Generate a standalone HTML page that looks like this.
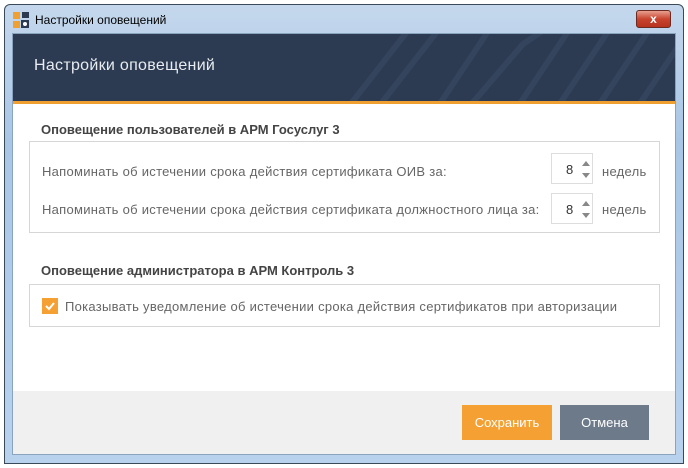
<!DOCTYPE html>
<html><head><meta charset="utf-8"><style>
*{margin:0;padding:0;box-sizing:border-box}
body{width:688px;height:468px;background:#fff;font-family:"Liberation Sans",sans-serif;position:relative;overflow:hidden}
.frame{position:absolute;left:4px;top:4px;width:680px;height:460px;border:1px solid #3a4a5a;border-radius:6px 6px 0 0;background:linear-gradient(#c4d7ec,#a9c6e6 30%,#b8d2ee)}
.title{position:absolute;left:35px;top:13px;font-size:12px;color:#000}
.icon{position:absolute;left:13px;top:12px;width:16px;height:16px}
.close{position:absolute;left:636px;top:10px;width:35px;height:18px;border:1px solid #6b2a22;border-radius:3px;background:linear-gradient(#e8a090,#c8442e 50%,#b8321e);color:#fff;font-weight:bold;font-size:12px;text-align:center;line-height:16px}
.content{position:absolute;left:12px;top:33px;width:664px;height:422px;background:#fff;border:1px solid #8aa4c0}
.hdr{position:absolute;left:0;top:0;width:662px;height:67px;background:#2c3b52;overflow:hidden}
.hdr span{position:absolute;left:21px;top:23px;color:#e8ecf0;font-size:16px;letter-spacing:0.3px}
.orange{position:absolute;left:0;top:67px;width:662px;height:3px;background:#f0a030}
.gt{position:absolute;font-size:13px;font-weight:bold;color:#444}
.box{position:absolute;border:1px solid #d6d6d6;background:#fff}
.lbl{position:absolute;font-size:13px;color:#666;white-space:nowrap;letter-spacing:0.28px}
.spin{position:absolute;width:42px;height:31px;border:1px solid #ddd;font-size:13px;color:#333}
.spin b{position:absolute;left:14px;top:8px;font-weight:normal}
.up,.dn{position:absolute;left:30px;width:0;height:0;border-left:4px solid transparent;border-right:4px solid transparent}
.up{top:7px;border-bottom:5px solid #888}.dn{top:19px;border-top:5px solid #888}
.foot{position:absolute;left:0;top:357px;width:662px;height:63px;background:#f0f0f0}
.btn{position:absolute;top:14px;height:35px;color:#fff;font-size:13px;text-align:center;line-height:35px}
</style></head><body>
<div class="frame"></div>
<svg class="icon" viewBox="0 0 16 16"><rect x="0" y="0" width="7" height="7" fill="#f0a030"/><rect x="0" y="9" width="7" height="7" fill="#f0a030"/><rect x="8" y="8" width="8" height="8" fill="#2c3b52"/><circle cx="12" cy="12" r="2" fill="#fff"/><rect x="9" y="0" width="7" height="6" fill="#2c3b52"/></svg>
<div class="title">Настройки оповещений</div>
<div class="close">x</div>
<div class="content">
<div class="hdr">
<svg width="662" height="67" style="position:absolute;left:0;top:0" fill="none" stroke="#34445c" stroke-width="6"><path d="M330 80 L400 -10 M360 80 L430 -10 M420 80 L480 -10 M450 80 L510 10 L540 -10 M500 80 L560 -10 M540 80 L600 -10 M580 80 L640 -10 M620 80 L680 -10"/></svg>
<span>Настройки оповещений</span></div>
<div class="orange"></div>
<div class="gt" style="left:28px;top:88px">Оповещение пользователей в АРМ Госуслуг 3</div>
<div class="box" style="left:16px;top:107px;width:631px;height:92px"></div>
<div class="lbl" style="left:29px;top:130px">Напоминать об истечении срока действия сертификата ОИВ за:</div>
<div class="spin" style="left:538px;top:119px"><b>8</b><i class="up"></i><i class="dn"></i></div>
<div class="lbl" style="left:589px;top:130px">недель</div>
<div class="lbl" style="left:29px;top:168px">Напоминать об истечении срока действия сертификата должностного лица за:</div>
<div class="spin" style="left:538px;top:159px"><b>8</b><i class="up"></i><i class="dn"></i></div>
<div class="lbl" style="left:589px;top:168px">недель</div>
<div class="gt" style="left:28px;top:229px">Оповещение администратора в АРМ Контроль 3</div>
<div class="box" style="left:16px;top:250px;width:631px;height:43px"></div>
<div style="position:absolute;left:29px;top:264px;width:16px;height:16px;background:#f5a033"><svg width="16" height="16"><path d="M4 8 L7 11 L12 5" stroke="#fff" stroke-width="2" fill="none"/></svg></div>
<div class="lbl" style="left:52px;top:265px">Показывать уведомление об истечении срока действия сертификатов при авторизации</div>
<div class="foot">
<div class="btn" style="left:449px;width:90px;background:#f5a033">Сохранить</div>
<div class="btn" style="left:547px;width:89px;background:#6c7a89">Отмена</div>
</div>
</div>
</body></html>
